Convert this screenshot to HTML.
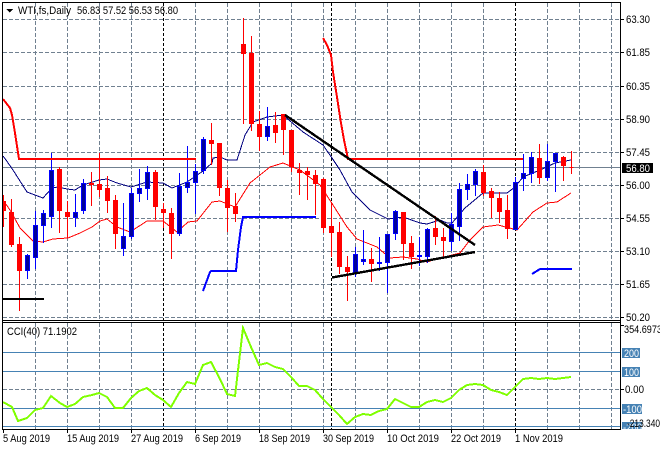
<!DOCTYPE html>
<html><head><meta charset="utf-8"><title>WTI,fs,Daily</title>
<style>
html,body{margin:0;padding:0;background:#fff;width:660px;height:450px;overflow:hidden}
svg{display:block}
text{font-family:"Liberation Sans",sans-serif;font-size:11px;fill:#000}
</style></head><body>
<svg width="660" height="450" viewBox="0 0 660 450" xmlns="http://www.w3.org/2000/svg">
<defs>
<clipPath id="m"><rect x="3" y="3" width="617" height="317"/></clipPath>
<clipPath id="c"><rect x="3" y="323" width="617" height="106"/></clipPath>
<clipPath id="l"><rect x="623" y="422" width="19" height="7"/></clipPath>
</defs>
<rect width="660" height="450" fill="#fff"/>
<!-- main grid -->
<g shape-rendering="crispEdges" fill="none">
<path stroke="#708090" stroke-dasharray="4 2" d="M3 19.5H620M3 52.5H620M3 86.5H620M3 119.5H620M3 152.5H620M3 185.5H620M3 218.5H620M3 251.5H620M3 284.5H620M3 317.5H620"/>
<path stroke="#708090" stroke-dasharray="4 2" d="M35.5 3V320M67.5 3V320M99.5 3V320M131.5 3V320M195.5 3V320M227.5 3V320M259.5 3V320M291.5 3V320M323.5 3V320M355.5 3V320M387.5 3V320M419.5 3V320M451.5 3V320M483.5 3V320M547.5 3V320M579.5 3V320M611.5 3V320"/>
<path stroke="#708090" stroke-dasharray="4 2" d="M35.5 323V429M67.5 323V429M99.5 323V429M131.5 323V429M195.5 323V429M227.5 323V429M259.5 323V429M291.5 323V429M323.5 323V429M355.5 323V429M387.5 323V429M419.5 323V429M451.5 323V429M483.5 323V429M547.5 323V429M579.5 323V429M611.5 323V429M3 389.5H620"/>
<path stroke="#000" stroke-dasharray="3 2" d="M163.5 3V320M331.5 3V320M515.5 3V320M163.5 323V429M331.5 323V429M515.5 323V429"/>
<path stroke="#708090" d="M3 167.5H620"/>
<path stroke="#4682b4" d="M3 352.5H620M3 371.5H620M3 408.5H620M3 426.5H620"/>
</g>
<!-- moving averages -->
<g fill="none" clip-path="url(#m)" shape-rendering="crispEdges">
<polyline stroke="#000080" points="3,156 6,160 13,170 27,192 43,198 52,188 58,187 67,189 75,190 83,185 99,180 107,179 117,183 131,187 147,182 163,183 172,188 187,182 203,171 212,163 213,158 220,157 227,160 237,160 245,135 253,122 267,117 283,115 303,132 323,145 332,158 340,170 352,192 370,210 388,219 403,217 420,223 427,224 440,220 447,223 452,223 465,208 483,193 507,193 515,187 523,177 540,170 555,163 571,160"/>
<polyline stroke="#ff0000" points="3,200 10,210 20,228 33,241 43,242 53,239 68,238 80,233 92,227 100,221 107,219 117,227 130,232 147,221 163,221 177,232 188,222 197,221 212,202 220,201 235,207 250,183 270,167 283,163 300,170 320,185 333,205 347,227 357,239 377,247 390,258 403,257 417,259 427,262 440,258 460,253 470,240 483,227 498,225 517,230 533,212 547,203 557,202 571,193"/>
</g>
<!-- candles -->
<g clip-path="url(#m)" shape-rendering="crispEdges">
<path stroke="#ff0000" fill="none" d="M3.5 195V227M11.5 199V247M19.5 237V311M59.5 167V233M67.5 201V238M91.5 172V206M99.5 153V197M107.5 176V213M115.5 195V249M155.5 170V220M163.5 203V228M171.5 208V259M211.5 123V165M219.5 143V196M227.5 180V232M235.5 193V222M243.5 18V124M251.5 36V131M259.5 111V151M275.5 112V143M283.5 114V155M291.5 130V172M299.5 163V195M307.5 167V200M315.5 170V215M323.5 178V233M331.5 202V257M339.5 222V274M347.5 256V301M371.5 248V282M403.5 212V260M411.5 236V269M435.5 216V245M443.5 228V258M483.5 165V196M491.5 188V218M499.5 192V223M507.5 195V239M539.5 144V184M563.5 156V181M571.5 151V174"/>
<path stroke="#ff0000" fill="#ff0000" d="M1.5 201.5h4V210.5h-4zM9.5 212.5h4V244.5h-4zM17.5 244.5h4V270.5h-4zM57.5 169.5h4V210.5h-4zM65.5 212.5h4V216.5h-4zM89.5 183.5h4V184.5h-4zM97.5 184.5h4V189.5h-4zM105.5 188.5h4V200.5h-4zM113.5 200.5h4V233.5h-4zM153.5 172.5h4V206.5h-4zM161.5 209.5h4V212.5h-4zM169.5 213.5h4V233.5h-4zM209.5 140.5h4V143.5h-4zM217.5 143.5h4V187.5h-4zM225.5 188.5h4V207.5h-4zM233.5 206.5h4V213.5h-4zM241.5 44.5h4V53.5h-4zM249.5 53.5h4V123.5h-4zM257.5 124.5h4V136.5h-4zM273.5 125.5h4V132.5h-4zM281.5 114.5h4V129.5h-4zM289.5 130.5h4V166.5h-4zM297.5 170.5h4V172.5h-4zM305.5 171.5h4V174.5h-4zM313.5 175.5h4V183.5h-4zM321.5 179.5h4V227.5h-4zM329.5 226.5h4V232.5h-4zM337.5 232.5h4V266.5h-4zM345.5 267.5h4V271.5h-4zM369.5 259.5h4V263.5h-4zM401.5 212.5h4V243.5h-4zM409.5 243.5h4V256.5h-4zM433.5 228.5h4V236.5h-4zM441.5 237.5h4V240.5h-4zM481.5 172.5h4V192.5h-4zM489.5 191.5h4V197.5h-4zM497.5 198.5h4V211.5h-4zM505.5 210.5h4V228.5h-4zM537.5 158.5h4V177.5h-4zM561.5 157.5h4V165.5h-4zM569.5 167.5h4V167.5h-4z"/>
<path stroke="#0000ff" fill="none" d="M27.5 254V279M35.5 211V269M43.5 210V243M51.5 153V228M75.5 194V227M83.5 179V214M123.5 203V256M131.5 188V239M139.5 169V202M147.5 166V200M179.5 173V236M187.5 146V193M195.5 164V214M203.5 137V174M267.5 107V141M355.5 247V277M363.5 230V265M379.5 237V271M387.5 234V293M395.5 210V240M419.5 237V266M427.5 228V263M451.5 213V251M459.5 183V241M467.5 174V200M475.5 169V196M515.5 177V230M523.5 154V191M531.5 152V183M547.5 144V181M555.5 153V192"/>
<path stroke="#0000ff" fill="#000099" d="M25.5 255.5h4V270.5h-4zM33.5 225.5h4V257.5h-4zM41.5 213.5h4V225.5h-4zM49.5 170.5h4V216.5h-4zM73.5 212.5h4V217.5h-4zM81.5 183.5h4V210.5h-4zM121.5 236.5h4V248.5h-4zM129.5 193.5h4V236.5h-4zM137.5 188.5h4V193.5h-4zM145.5 172.5h4V188.5h-4zM177.5 186.5h4V233.5h-4zM185.5 182.5h4V187.5h-4zM193.5 171.5h4V182.5h-4zM201.5 139.5h4V170.5h-4zM265.5 126.5h4V136.5h-4zM353.5 254.5h4V272.5h-4zM361.5 259.5h4V261.5h-4zM377.5 262.5h4V263.5h-4zM385.5 234.5h4V262.5h-4zM393.5 211.5h4V233.5h-4zM417.5 255.5h4V256.5h-4zM425.5 229.5h4V256.5h-4zM449.5 224.5h4V241.5h-4zM457.5 189.5h4V226.5h-4zM465.5 184.5h4V189.5h-4zM473.5 171.5h4V184.5h-4zM513.5 182.5h4V229.5h-4zM521.5 173.5h4V178.5h-4zM529.5 157.5h4V173.5h-4zM545.5 161.5h4V177.5h-4zM553.5 153.5h4V161.5h-4z"/>
</g>
<!-- thick indicator lines -->
<g fill="none" clip-path="url(#m)" stroke-width="2" shape-rendering="crispEdges">
<polyline stroke="#ff0000" points="3,99 10,108 12,115 15,133 19,159 196,159"/>
<polyline stroke="#ff0000" points="323,38 327,45 331,55 333,72 337,97 341,123 344,140 348,159 523,159"/>
<polyline stroke="#0000ff" points="203,291 210,272 211,271 236,271 238,250 241,227 243,217 316,217"/>
<polyline stroke="#0000ff" points="532,274 540,269 572,269"/>
<polyline stroke="#000" points="3,299 44,299"/>
<polyline stroke="#000" stroke-width="2.4" points="285,115 475,245"/>
<polyline stroke="#000" stroke-width="2.4" points="332,277.5 475,252"/>
</g>
<!-- CCI -->
<polyline clip-path="url(#c)" fill="none" stroke="#7fff00" stroke-width="2" shape-rendering="crispEdges" points="3,402 12,407 18,421 27,418 35,410 43,408 51,396 60,403 67,407 75,404 83,397 92,395 99,393 107,397 115,408 123,408 131,398 139,391 147,388 155,395 163,400 171,407 179,393 187,382 195,384 203,365 211,362 220,379 227,394 235,396 243,328 251,347 259,365 267,363 275,367 283,369 291,377 299,386 307,386 315,390 323,399 331,407 339,415 347,424 355,417 363,414 371,415 379,411 387,409 395,399 403,403 411,407 419,407 427,402 435,400 443,402 451,398 459,390 467,385 475,384 483,385 491,390 499,392 507,395 515,387 523,379 531,378 539,379 547,378 555,379 563,378 571,377"/>
<!-- frame + ticks -->
<g shape-rendering="crispEdges" fill="none" stroke="#000">
<path d="M2.5 2.5H620.5V429.5H2.5ZM2.5 320.5H620.5M2.5 322.5H620.5"/>
<path d="M621 19.5h3M621 52.5h3M621 86.5h3M621 119.5h3M621 152.5h3M621 185.5h3M621 218.5h3M621 251.5h3M621 284.5h3M621 317.5h3M621 389.5h3M621 325.5h3"/>
<path d="M3.5 430v3M67.5 430v3M131.5 430v3M195.5 430v3M259.5 430v3M323.5 430v3M387.5 430v3M451.5 430v3M515.5 430v3"/>
</g>
<!-- axis label boxes -->
<g shape-rendering="crispEdges">
<rect x="622" y="348" width="18" height="10" fill="#4682b4"/>
<rect x="622" y="367" width="18" height="10" fill="#4682b4"/>
<rect x="622" y="404" width="20" height="10" fill="#4682b4"/>
<rect x="622" y="422" width="20" height="7" fill="#4682b4"/>
<rect x="622" y="163" width="31" height="10" fill="#000"/>
<path d="M6 9h7l-3.5 3.5z" fill="#000"/>
</g>
<!-- header -->
<text x="18" y="14" textLength="53" lengthAdjust="spacingAndGlyphs">WTI,fs,Daily</text>
<text x="77" y="14" textLength="101" lengthAdjust="spacingAndGlyphs">56.83 57.52 56.53 56.80</text>
<text x="7" y="335" textLength="70" lengthAdjust="spacingAndGlyphs">CCI(40) 71.1902</text>
<!-- price axis -->
<g>
<text x="626" y="23" textLength="24" lengthAdjust="spacingAndGlyphs">63.30</text>
<text x="626" y="56" textLength="24" lengthAdjust="spacingAndGlyphs">61.85</text>
<text x="626" y="90" textLength="24" lengthAdjust="spacingAndGlyphs">60.35</text>
<text x="626" y="123" textLength="24" lengthAdjust="spacingAndGlyphs">58.90</text>
<text x="626" y="156" textLength="24" lengthAdjust="spacingAndGlyphs">57.45</text>
<text x="626" y="189" textLength="24" lengthAdjust="spacingAndGlyphs">56.00</text>
<text x="626" y="222" textLength="24" lengthAdjust="spacingAndGlyphs">54.55</text>
<text x="626" y="255" textLength="24" lengthAdjust="spacingAndGlyphs">53.10</text>
<text x="626" y="288" textLength="24" lengthAdjust="spacingAndGlyphs">51.65</text>
<text x="626" y="321" textLength="24" lengthAdjust="spacingAndGlyphs">50.20</text>
<text x="626" y="172" textLength="24" lengthAdjust="spacingAndGlyphs" style="fill:#fff">56.80</text>
<text x="624" y="333" textLength="38" lengthAdjust="spacingAndGlyphs">354.6973</text>
<text x="624" y="357" textLength="15" lengthAdjust="spacingAndGlyphs" style="fill:#fff">200</text>
<text x="624" y="376" textLength="15" lengthAdjust="spacingAndGlyphs" style="fill:#fff">100</text>
<text x="625" y="393" textLength="19" lengthAdjust="spacingAndGlyphs">0.00</text>
<text x="623" y="413" textLength="19" lengthAdjust="spacingAndGlyphs" style="fill:#fff">-100</text>
<text x="623" y="431" textLength="19" lengthAdjust="spacingAndGlyphs" style="fill:#fff" clip-path="url(#l)">-200</text>
<text x="627" y="427" textLength="33" lengthAdjust="spacingAndGlyphs">-213.340</text>
</g>
<!-- date axis -->
<g>
<text x="3" y="442" textLength="47" lengthAdjust="spacingAndGlyphs">5 Aug 2019</text>
<text x="67" y="442" textLength="52" lengthAdjust="spacingAndGlyphs">15 Aug 2019</text>
<text x="131" y="442" textLength="52" lengthAdjust="spacingAndGlyphs">27 Aug 2019</text>
<text x="195" y="442" textLength="46" lengthAdjust="spacingAndGlyphs">6 Sep 2019</text>
<text x="259" y="442" textLength="51" lengthAdjust="spacingAndGlyphs">18 Sep 2019</text>
<text x="323" y="442" textLength="51" lengthAdjust="spacingAndGlyphs">30 Sep 2019</text>
<text x="387" y="442" textLength="52" lengthAdjust="spacingAndGlyphs">10 Oct 2019</text>
<text x="451" y="442" textLength="50" lengthAdjust="spacingAndGlyphs">22 Oct 2019</text>
<text x="515" y="442" textLength="48" lengthAdjust="spacingAndGlyphs">1 Nov 2019</text>
</g>
</svg>
</body></html>
